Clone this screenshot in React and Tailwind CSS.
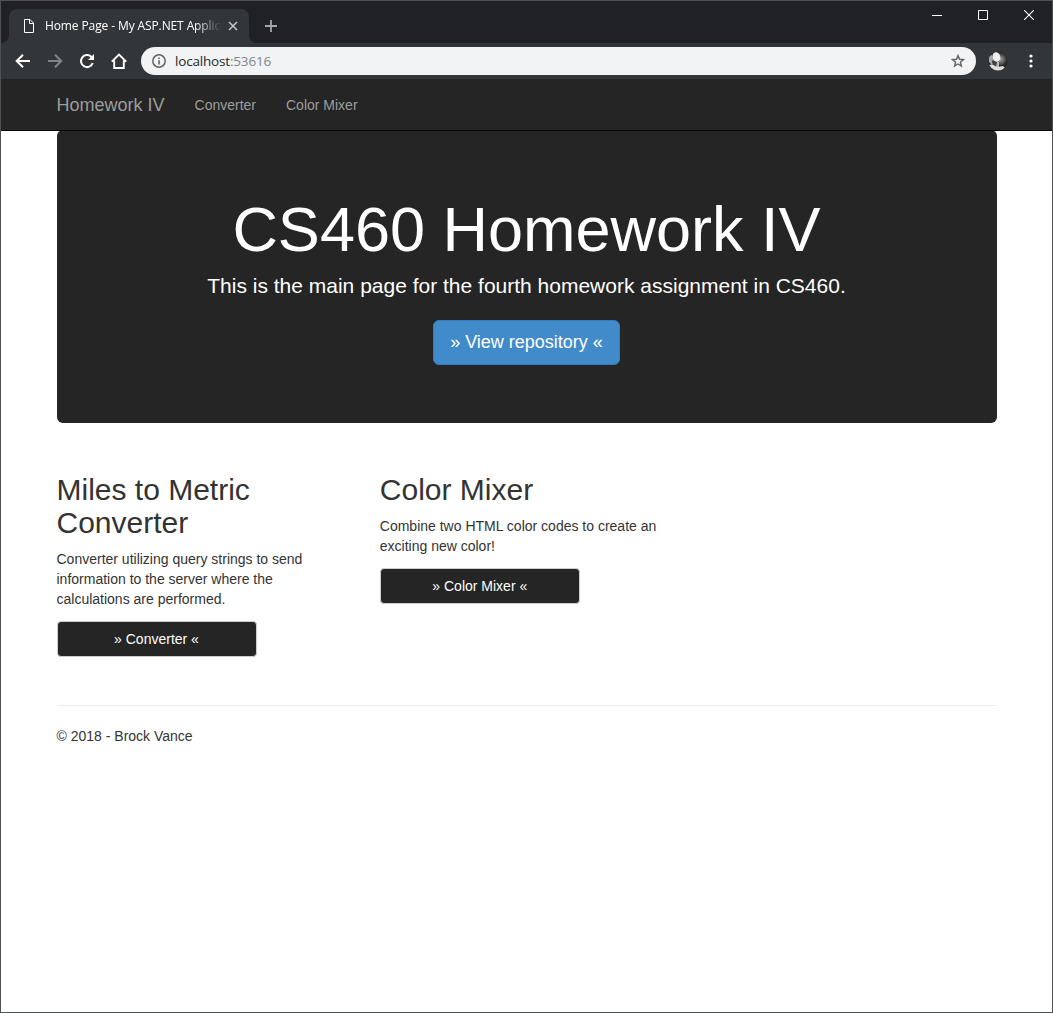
import React from "react";

function TabStrip() {
  return (
    <div className="flex h-[42px] items-start bg-[#202124] text-white">
      <svg className="mt-[34px] h-2 w-2 shrink-0 text-[#323639]" viewBox="0 0 8 8" fill="currentColor">
        <path d="M8 0v8H0a8 8 0 0 0 8-8z" />
      </svg>
      <div className="mt-2 flex h-[34px] w-[240px] shrink-0 items-center rounded-t-lg bg-[#323639] pl-[14px]">
        <svg className="h-[14px] w-[12px] shrink-0" viewBox="0 0 12 14" fill="none" stroke="#fff" strokeWidth="1">
          <path d="M1.500.500h5.500l3.500 3.500v9.500h-9z" />
          <path d="M6.500.5v4h4" />
        </svg>
        <div className="ml-[10px] w-[177px] overflow-hidden whitespace-nowrap font-['Open_Sans',sans-serif] text-[12px] leading-4 tracking-[-0.11px] [mask-image:linear-gradient(to_right,#000_150px,transparent_177px)]">
          Home Page - My ASP.NET Applica
        </div>
        <svg className="ml-[6px] h-[10px] w-[10px] shrink-0" viewBox="0 0 10 10" stroke="#c5c7c8" strokeWidth="1.500">
          <path d="M1 1l8 8M9 1L1 9" />
        </svg>
      </div>
      <svg className="mt-[34px] h-2 w-2 shrink-0 text-[#323639]" viewBox="0 0 8 8" fill="currentColor">
        <path d="M0 0v8h8a8 8 0 0 1-8-8z" />
      </svg>
      <svg className="ml-[8px] mt-[19px] h-[12px] w-[12px] shrink-0" viewBox="0 0 12 12" stroke="#a3a7ab" strokeWidth="1.800">
        <path d="M6 0v12M0 6h12" />
      </svg>
      <div className="ml-auto mr-[18px] mt-[9px] flex gap-[36px]">
        <svg className="h-[10px] w-[10px]" viewBox="0 0 10 10" fill="#fff"><path d="M0 5h10v1H0z" /></svg>
        <svg className="h-[10px] w-[10px]" viewBox="0 0 10 10" fill="none" stroke="#fff"><path d="M.5.5h9v9h-9z" /></svg>
        <svg className="h-[10px] w-[10px]" viewBox="0 0 10 10" stroke="#fff" strokeWidth="1.100"><path d="M0 0l10 10M10 0L0 10" /></svg>
      </div>
    </div>
  );
}

function Avatar() {
  return (
    <svg className="ml-[12px] h-5 w-5 shrink-0" viewBox="0 0 20 20">
      <defs>
        <clipPath id="avatar-clip"><circle cx="10" cy="10" r="9.6" /></clipPath>
        <radialGradient id="avatar-shade" cx=".62" cy=".42" r=".34">
          <stop offset="0" stopColor="#a5a5a5" />
          <stop offset="1" stopColor="#242526" />
        </radialGradient>
      </defs>
      <g clipPath="url(#avatar-clip)">
        <path fill="url(#avatar-shade)" d="M0 0h20v20H0z" />
        <path fill="#a8a8a8" d="M1 5l3-1 2 8-2 2-3-3z" />
        <ellipse cx="8.400" cy="6" rx="3.900" ry="4.900" fill="#eee" transform="rotate(-14 8.4 6)" />
        <path fill="#444" d="M4 9l3 2.500h3v3l-3 .5-3-3z" />
        <path fill="#b8b8b8" d="M9 11h2v5H8z" />
        <path fill="#dedede" d="M1 14q4-1.500 6 1l3 1 5-1 2 2-4 3H5z" />
      </g>
    </svg>
  );
}

function Toolbar() {
  return (
    <div className="flex h-9 items-center bg-[#323639] pl-[14px]">
      <svg className="h-4 w-4 shrink-0" viewBox="0 0 16 16" fill="none" stroke="#fff" strokeWidth="2">
        <path d="M15 8H2.5M8 1.7L1.7 8 8 14.3" />
      </svg>
      <svg className="ml-4 h-4 w-4 shrink-0" viewBox="0 0 16 16" fill="none" stroke="#818486" strokeWidth="2">
        <path d="M1 8h12.500M8 1.700l6.300 6.300L8 14.300" />
      </svg>
      <svg className="ml-4 h-4 w-4 shrink-0" viewBox="0 0 16 16" fill="none" stroke="#fff" strokeWidth="2">
        <path d="M13.700 10a6 6 0 1 1-1.500-6.200L14 5.500" />
        <path d="M15 1v6H9z" fill="#fff" stroke="none" />
      </svg>
      <svg className="ml-4 h-4 w-4 shrink-0" viewBox="0 0 16 16" fill="none" stroke="#fff" strokeWidth="1.900">
        <path d="M.8 8.700L8 1.500l7.200 7.200M3.200 7.500V15h9.600V7.500" />
      </svg>
      <div className="ml-[14px] flex h-7 w-[835px] shrink-0 items-center rounded-full bg-[#f1f3f4] pl-[11px] pr-[11px]">
        <svg className="h-[14px] w-[14px] shrink-0" viewBox="0 0 14 14" fill="none" stroke="#5f6368" strokeWidth="1.500">
          <circle cx="7" cy="7" r="6.200" />
          <path d="M7 6.200v4.300M7 3.500v1.500" strokeWidth="1.600" />
        </svg>
        <span className="ml-[9px] font-['Open_Sans',sans-serif] text-[13.500px] leading-5 tracking-[-0.18px] text-[#27292c]">
          localhost<span className="text-[#80868b]">:53616</span>
        </span>
        <svg className="ml-auto h-[14px] w-[14px] shrink-0" viewBox="0 0 14 14" fill="none" stroke="#5f6368" strokeWidth="1.400">
          <path d="M7 1.600l1.500 3.700 4 .3-3.100 2.600 1 3.900L7 10l-3.400 2.100 1-3.900-3.100-2.600 4-.3z" />
        </svg>
      </div>
      <Avatar />
      <svg className="ml-[20.500px] h-[14px] w-[4px] shrink-0" viewBox="0 0 4 14" fill="#fff">
        <circle cx="2" cy="2" r="1.600" /><circle cx="2" cy="7" r="1.600" /><circle cx="2" cy="12" r="1.600" />
      </svg>
    </div>
  );
}

function Feature({ title, text, button }) {
  return (
    <div className="w-[323.300px] pr-[30px]">
      <h2 className="text-[30px] leading-[33px]">{title}</h2>
      <p className="mt-[10px]">{text}</p>
      <a className="mt-3 flex h-9 w-[200px] items-center justify-center rounded border border-[#ccc] bg-[#252525] text-white">
        {button}
      </a>
    </div>
  );
}

export default function App() {
  return (
    <div className="flex h-[1013px] w-[1053px] flex-col overflow-hidden border border-[#4f5152] bg-white font-['Liberation_Sans',Arial,sans-serif] text-[14px] leading-5 text-[#333]">
      <TabStrip />
      <Toolbar />
      <nav className="relative z-10 h-[52px] shrink-0 border-b border-[#080808] bg-[#252525] text-[#9d9d9d]">
        <div className="mx-auto flex h-full w-[970px] items-center px-[15px]">
          <span className="text-[18px]">Homework IV</span>
          <span className="ml-[30px]">Converter</span>
          <span className="ml-[30px]">Color Mixer</span>
        </div>
      </nav>
      <main className="mx-auto w-[970px] px-[15px]">
        <section className="-mt-px flex h-[293px] flex-col items-center rounded-md bg-[#252525] pt-[65px] text-white">
          <h1 className="text-[63px] leading-[69px]">CS460 Homework IV</h1>
          <p className="mt-[7px] text-[21px] leading-[30px]">This is the main page for the fourth homework assignment in CS460.</p>
          <a className="mt-[19px] flex h-[45px] w-[187px] items-center justify-center rounded-md border border-[#357ebd] bg-[#428bca] pb-[2px] text-[18px]">
            » View repository «
          </a>
        </section>
        <section className="mt-[50px] flex h-[232px]">
          <Feature title="Miles to Metric Converter" text="Converter utilizing query strings to send information to the server where the calculations are performed." button="» Converter «" />
          <Feature title="Color Mixer" text="Combine two HTML color codes to create an exciting new color!" button="» Color Mixer «" />
        </section>
        <footer className="border-t border-[#eee] pt-5">© 2018 - Brock Vance</footer>
      </main>
    </div>
  );
}
